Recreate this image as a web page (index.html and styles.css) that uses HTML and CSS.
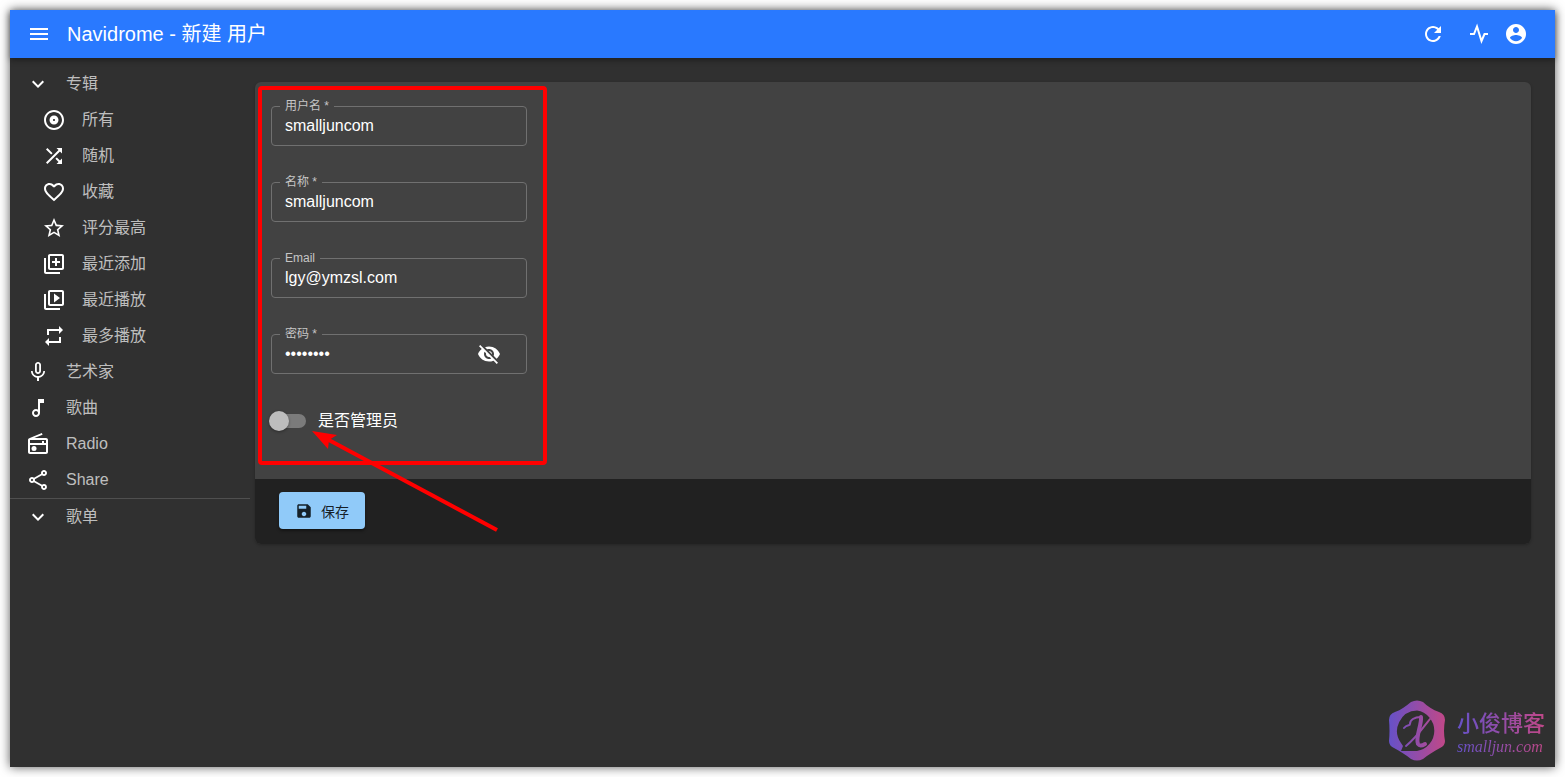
FILE: index.html
```
<!DOCTYPE html>
<html lang="zh-CN">
<head>
<meta charset="utf-8">
<meta name="viewport" content="width=device-width, initial-scale=1">
<title>Navidrome - 新建 用户</title>
<link rel="stylesheet" href="styles.css">
</head>
<body>
<div class="window">
  <header class="appbar">
    <button class="icon-button" type="button" aria-label="菜单"><svg class="icon" viewBox="0 0 24 24"><path d="M3 18h18v-2H3v2zm0-5h18v-2H3v2zm0-7v2h18V6H3z"/></svg></button>
    <h1 class="title">Navidrome - 新建 用户</h1>
    <div class="actions">
      <button class="icon-button refresh" type="button" aria-label="刷新"><svg class="icon" viewBox="0 0 24 24"><path d="M17.65 6.35C16.2 4.9 14.21 4 12 4c-4.42 0-7.99 3.58-7.99 8s3.57 8 7.99 8c3.73 0 6.84-2.55 7.73-6h-2.08c-.82 2.33-3.04 4-5.65 4-3.31 0-6-2.69-6-6s2.69-6 6-6c1.66 0 3.14.69 4.22 1.78L13 11h7V4l-2.35 2.35z"/></svg></button>
      <button class="icon-button" type="button" aria-label="活动"><svg class="icon activity" viewBox="0 0 24 24"><path d="M3 12h4l3-7.500 4.500 14.500 3-7H21"/></svg></button>
      <button class="icon-button" type="button" aria-label="账户"><svg class="icon" viewBox="0 0 24 24"><path d="M12 2C6.48 2 2 6.48 2 12s4.48 10 10 10 10-4.48 10-10S17.52 2 12 2zm0 3c1.66 0 3 1.34 3 3s-1.34 3-3 3-3-1.34-3-3 1.34-3 3-3zm0 14.200c-2.500 0-4.710-1.280-6-3.220.030-1.990 4-3.080 6-3.080 1.990 0 5.970 1.090 6 3.080-1.290 1.940-3.500 3.220-6 3.220z"/></svg></button>
    </div>
  </header>
  <div class="body">
    <nav class="sidebar">
      <a class="item" href="#"><svg class="icon" viewBox="0 0 24 24"><path d="M16.590 8.590L12 13.170 7.410 8.590 6 10l6 6 6-6z"/></svg>专辑</a>
      <div class="submenu">
        <a class="item" href="#"><svg class="icon" viewBox="0 0 24 24"><path d="M12 2C6.480 2 2 6.480 2 12s4.480 10 10 10 10-4.480 10-10S17.520 2 12 2zm0 18c-4.410 0-8-3.590-8-8s3.590-8 8-8 8 3.590 8 8-3.590 8-8 8zm0-12.500c-2.490 0-4.500 2.010-4.500 4.500s2.010 4.500 4.500 4.500 4.500-2.010 4.500-4.500-2.010-4.500-4.500-4.500zm0 5.500c-.55 0-1-.45-1-1s.45-1 1-1 1 .45 1 1-.45 1-1 1z"/></svg>所有</a>
        <a class="item" href="#"><svg class="icon" viewBox="0 0 24 24"><path d="M10.590 9.170L5.410 4 4 5.410l5.170 5.170 1.420-1.410zM14.500 4l2.040 2.040L4 18.590 5.410 20 17.960 7.460 20 9.500V4h-5.500zm.33 9.410l-1.410 1.410 3.130 3.130L14.500 20H20v-5.500l-2.040 2.040-3.130-3.130z"/></svg>随机</a>
        <a class="item" href="#"><svg class="icon" viewBox="0 0 24 24"><path d="M16.500 3c-1.740 0-3.410.81-4.500 2.090C10.910 3.810 9.240 3 7.500 3 4.420 3 2 5.420 2 8.500c0 3.780 3.400 6.860 8.550 11.540L12 21.350l1.450-1.320C18.600 15.360 22 12.280 22 8.500 22 5.420 19.580 3 16.500 3zm-4.400 15.550l-.1.1-.1-.1C7.140 14.240 4 11.390 4 8.500 4 6.500 5.500 5 7.500 5c1.540 0 3.040.99 3.570 2.360h1.870C13.460 5.990 14.960 5 16.500 5c2 0 3.500 1.500 3.500 3.500 0 2.890-3.140 5.740-7.900 10.050z"/></svg>收藏</a>
        <a class="item" href="#"><svg class="icon" viewBox="0 0 24 24"><path d="M22 9.240l-7.190-.62L12 2 9.190 8.630 2 9.240l5.460 4.730L5.820 21 12 17.270 18.180 21l-1.630-7.030L22 9.240zM12 15.400l-3.760 2.270 1-4.280-3.320-2.880 4.380-.38L12 6.100l1.710 4.040 4.380.38-3.320 2.880 1 4.280L12 15.400z"/></svg>评分最高</a>
        <a class="item" href="#"><svg class="icon" viewBox="0 0 24 24"><path d="M4 6H2v14c0 1.100.9 2 2 2h14v-2H4V6zm16-4H8c-1.100 0-2 .9-2 2v12c0 1.100.9 2 2 2h12c1.100 0 2-.9 2-2V4c0-1.100-.9-2-2-2zm0 14H8V4h12v12zm-7-2h2v-3h3V9h-3V6h-2v3h-3v2h3z"/></svg>最近添加</a>
        <a class="item" href="#"><svg class="icon" viewBox="0 0 24 24"><path d="M4 6H2v14c0 1.100.9 2 2 2h14v-2H4V6zm16-4H8c-1.100 0-2 .9-2 2v12c0 1.100.9 2 2 2h12c1.100 0 2-.9 2-2V4c0-1.100-.9-2-2-2zm0 14H8V4h12v12zM12 5.500v9l6-4.500z"/></svg>最近播放</a>
        <a class="item" href="#"><svg class="icon" viewBox="0 0 24 24"><path d="M7 7h10v3l4-4-4-4v3H5v6h2V7zm10 10H7v-3l-4 4 4 4v-3h12v-6h-2v4z"/></svg>最多播放</a>
      </div>
      <a class="item" href="#"><svg class="icon" viewBox="0 0 24 24"><path d="M12 14c1.660 0 2.990-1.340 2.990-3L15 5c0-1.660-1.340-3-3-3S9 3.340 9 5v6c0 1.660 1.340 3 3 3zm-1.200-9.100c0-.66.54-1.200 1.200-1.200s1.200.54 1.200 1.200l-.01 6.200c0 .66-.53 1.200-1.190 1.200s-1.200-.54-1.200-1.200V4.900zm6.500 6.100c0 3-2.540 5.100-5.300 5.100S6.700 14 6.700 11H5c0 3.410 2.720 6.230 6 6.720V21h2v-3.280c3.280-.48 6-3.300 6-6.720h-1.700z"/></svg>艺术家</a>
      <a class="item" href="#"><svg class="icon" viewBox="0 0 24 24"><path d="M12 3v10.550c-.59-.34-1.270-.55-2-.55-2.210 0-4 1.790-4 4s1.790 4 4 4 4-1.790 4-4V7h4V3h-6zm-2 16c-1.100 0-2-.9-2-2s.9-2 2-2 2 .9 2 2-.9 2-2 2z"/></svg>歌曲</a>
      <a class="item" href="#"><svg class="icon" viewBox="0 0 24 24"><path d="M3.240 6.150C2.510 6.430 2 7.170 2 8v12c0 1.100.89 2 2 2h16c1.110 0 2-.9 2-2V8c0-1.110-.89-2-2-2H8.300l8.260-3.340L15.880 1 3.240 6.150zM20 20H4v-7h16v7zM20 11h-2V9h-2v2H4V8h16v3z"/><circle cx="8" cy="16.480" r="2.500"/></svg>Radio</a>
      <a class="item" href="#"><svg class="icon" viewBox="0 0 24 24"><path d="M18 16.080c-.76 0-1.440.3-1.960.77L8.910 12.700c.05-.23.09-.46.09-.7s-.04-.47-.09-.7l7.050-4.110c.54.5 1.250.81 2.040.81 1.660 0 3-1.340 3-3s-1.340-3-3-3-3 1.340-3 3c0 .24.04.47.09.7L8.040 9.810C7.500 9.310 6.790 9 6 9c-1.660 0-3 1.340-3 3s1.340 3 3 3c.79 0 1.500-.31 2.040-.81l7.120 4.160c-.05.21-.08.43-.08.65 0 1.610 1.310 2.920 2.920 2.920s2.920-1.310 2.920-2.920-1.310-2.920-2.920-2.920zM18 4c.55 0 1 .45 1 1s-.45 1-1 1-1-.45-1-1 .45-1 1-1zM6 13c-.55 0-1-.45-1-1s.45-1 1-1 1 .45 1 1-.45 1-1 1zm12 7.020c-.55 0-1-.45-1-1s.45-1 1-1 1 .45 1 1-.45 1-1 1z"/></svg>Share</a>
      <hr class="divider">
      <a class="item" href="#"><svg class="icon" viewBox="0 0 24 24"><path d="M16.590 8.590L12 13.170 7.410 8.590 6 10l6 6 6-6z"/></svg>歌单</a>
    </nav>
    <main class="content">
      <form class="card">
        <div class="fields">
          <fieldset class="field">
            <legend><label for="username">用户名 *</label></legend>
            <div class="field-row"><input id="username" type="text" value="smalljuncom"></div>
          </fieldset>
          <fieldset class="field">
            <legend><label for="name">名称 *</label></legend>
            <div class="field-row"><input id="name" type="text" value="smalljuncom"></div>
          </fieldset>
          <fieldset class="field">
            <legend><label for="email">Email</label></legend>
            <div class="field-row"><input id="email" type="text" value="lgy@ymzsl.com"></div>
          </fieldset>
          <fieldset class="field">
            <legend><label for="password">密码 *</label></legend>
            <div class="field-row"><input id="password" type="password" value="password"><button class="icon-button reveal" type="button" aria-label="显示密码"><svg class="icon" viewBox="0 0 24 24"><path d="M12 7c2.760 0 5 2.240 5 5 0 .65-.13 1.260-.36 1.830l2.920 2.920c1.510-1.260 2.700-2.890 3.430-4.750-1.730-4.390-6-7.500-11-7.500-1.400 0-2.740.25-3.980.7l2.160 2.160C10.740 7.130 11.350 7 12 7zM2 4.270l2.280 2.280.46.46C3.080 8.300 1.780 10.020 1 12c1.730 4.390 6 7.500 11 7.500 1.550 0 3.030-.3 4.380-.84l.42.42L19.730 22 21 20.730 3.270 3 2 4.270zM7.530 9.800l1.550 1.550c-.05.21-.08.43-.08.65 0 1.660 1.340 3 3 3 .22 0 .44-.03.65-.08l1.550 1.550c-.67.33-1.410.53-2.200.53-2.760 0-5-2.240-5-5 0-.79.2-1.530.53-2.200zm4.310-.78l3.150 3.150.02-.16c0-1.660-1.340-3-3-3l-.17.01z"/></svg></button></div>
          </fieldset>
          <label class="switch"><input type="checkbox">是否管理员</label>
        </div>
        <div class="toolbar">
          <button class="save" type="button"><svg class="save-icon" viewBox="0 0 24 24"><path d="M17 3H5c-1.110 0-2 .9-2 2v14c0 1.100.89 2 2 2h14c1.100 0 2-.9 2-2V7l-4-4zm-5 16c-1.660 0-3-1.340-3-3s1.340-3 3-3 3 1.340 3 3-1.340 3-3 3zm3-10H5V5h10v4z"/></svg>保存</button>
        </div>
        <svg class="annotation" viewBox="0 0 300 460" aria-hidden="true">
          <rect x="5" y="6" width="285" height="375" rx="2"/>
          <path d="M72 357L242 448"/>
          <path class="arrowhead" d="M57 349L82 353L74 358L73 367Z"/>
        </svg>
      </form>
    </main>
  </div>
  <div class="watermark">
    <svg class="logo" viewBox="0 0 58 62" aria-hidden="true">
      <defs><linearGradient id="brand" gradientUnits="userSpaceOnUse" x1="1" y1="0" x2="57" y2="0"><stop offset="0" stop-color="#6651c8"/><stop offset="1" stop-color="#c04888"/></linearGradient></defs>
      <path class="logo-fill" fill-rule="evenodd" d="M23 2Q29-1 35 2C39 6 45 10 51 12Q57 14 57 20Q55 31 57 41Q57 46 52 48C46 51 40 55 35 59Q29 62 23 59C18 55 12 51 6 48Q1 46 1 41Q2 31 1 20Q1 14 7 12C13 10 18 6 23 2ZM29 10.500A20.500 20.500 0 0 0 13 43L15 46L13 51H29A20.500 20.500 0 0 0 29 10.500Z"/>
      <path class="logo-line thin" d="M16 28C19 24 22 26 22 24C22 20 26 17 33 17"/>
      <path class="logo-line thick" d="M33 17C34 24 27 38 30 44Q32 47 37 44"/>
      <path class="logo-line thin" d="M42 19C35 28 27 39 18 46"/>
    </svg>
    <div class="brand"><span class="brand-name">小俊博客</span><span class="brand-site">smalljun.com</span></div>
  </div>
</div>
</body>
</html>
```
FILE: styles.css
```
* {
  box-sizing: border-box;
}

body {
  margin: 0;
  min-height: 100vh;
  padding: 10px;
  display: flex;
  background: #fff;
  color: #fff;
  font-family: "Liberation Sans", "Noto Sans CJK SC", sans-serif;
  font-size: 16px;
}

button,
input {
  font: inherit;
  color: inherit;
}

.window {
  position: relative;
  flex: 1;
  display: flex;
  flex-direction: column;
  background: #303030;
  box-shadow: 0 0 10px rgba(0, 0, 0, 0.65);
}

.icon {
  display: block;
  flex: none;
  width: 24px;
  height: 24px;
  fill: #fff;
}

.icon-button {
  padding: 0;
  border: 0;
  background: none;
}

.appbar {
  display: flex;
  align-items: center;
  gap: 16px;
  height: 48px;
  padding: 0 27px 0 17px;
  background: #2979ff;
  box-shadow: 0 2px 6px rgba(0, 0, 0, 0.4);
  z-index: 1;
}

.title {
  flex: 1;
  margin: 0;
  font-size: 20px;
  font-weight: 400;
  line-height: 32px;
}

.actions {
  display: flex;
  gap: 13px;
}

.refresh {
  margin-right: 9px;
}

.activity {
  fill: none;
  stroke: #fff;
  stroke-width: 2;
}

.body {
  flex: 1;
  display: flex;
}

.sidebar {
  flex: none;
  width: 240px;
  padding-top: 8px;
}

.item {
  display: flex;
  align-items: center;
  gap: 16px;
  height: 36px;
  padding-left: 16px;
  color: rgba(255, 255, 255, 0.7);
  line-height: 24px;
  text-decoration: none;
}

.submenu .item {
  padding-left: 32px;
}

.divider {
  height: 1px;
  margin: 0;
  border: 0;
  background: #4f4f4f;
}

.content {
  flex: 1;
  min-width: 0;
  padding: 24px 24px 24px 5px;
}

.card {
  position: relative;
  border-radius: 6px;
  background: #424242;
  box-shadow: 0 1px 3px rgba(0, 0, 0, 0.25);
}

.fields {
  display: flex;
  flex-direction: column;
  align-items: flex-start;
  gap: 30px;
  padding: 18px 16px 46px;
}

.field {
  width: 256px;
  min-width: 0;
  margin: 0;
  padding: 0;
  border: 1px solid #707070;
  border-radius: 4px;
}

.field legend {
  height: 12px;
  margin-left: 8px;
  padding: 0 5px;
  color: #c6c6c6;
  font-size: 12px;
  line-height: 12px;
}

.field label {
  display: block;
}

.field-row {
  display: flex;
  align-items: center;
  height: 33px;
  padding: 0 25px 6px 13px;
}

.field input {
  flex: 1;
  min-width: 0;
  height: 27px;
  padding: 0;
  border: 0;
  outline: 0;
  background: none;
}

.switch {
  display: flex;
  align-items: center;
  gap: 12px;
  padding: 5px 0 0 1px;
  line-height: 24px;
}

.switch input {
  appearance: none;
  position: relative;
  width: 34px;
  height: 14px;
  margin: 0;
  border-radius: 7px;
  background: #7b7b7b;
}

.switch input::before {
  content: "";
  position: absolute;
  top: -3px;
  left: -3px;
  width: 20px;
  height: 20px;
  border-radius: 50%;
  background: #bdbdbd;
  box-shadow: 0 1px 3px rgba(0, 0, 0, 0.35);
}

.toolbar {
  padding: 13px 24px 15px;
  border-radius: 0 0 6px 6px;
  background: #212121;
}

.save {
  display: flex;
  align-items: center;
  gap: 8px;
  height: 37px;
  padding: 0 16px;
  border: 0;
  border-radius: 4px;
  background: #90caf9;
  box-shadow: 0 2px 3px rgba(0, 0, 0, 0.4);
  color: rgba(0, 0, 0, 0.87);
  font-size: 14px;
}

.save-icon {
  width: 18px;
  height: 18px;
  fill: #152028;
}

.annotation {
  position: absolute;
  top: 0;
  left: 0;
  width: 300px;
  height: 460px;
  fill: none;
  stroke: #f00;
  stroke-width: 4;
  pointer-events: none;
}

.arrowhead {
  fill: #f00;
  stroke: none;
}

.watermark {
  position: absolute;
  right: 10px;
  bottom: 5px;
  display: flex;
  align-items: center;
  gap: 11px;
}

.logo {
  width: 58px;
  height: 62px;
}

.logo-fill {
  fill: url(#brand);
}

.logo-line {
  fill: none;
  stroke: url(#brand);
  stroke-width: 3;
  stroke-linecap: round;
}

.thick {
  stroke-width: 4;
}

.thin {
  stroke-width: 2;
}

.brand {
  display: flex;
  flex-direction: column;
  padding-top: 5px;
  background: linear-gradient(90deg, #6651c8, #c04888);
  background-clip: text;
  color: transparent;
}

.brand-name {
  font-size: 22px;
  font-weight: 500;
  line-height: 26px;
}

.brand-site {
  font-family: "Liberation Serif", serif;
  font-size: 16px;
  font-style: italic;
  line-height: 20px;
}
```
